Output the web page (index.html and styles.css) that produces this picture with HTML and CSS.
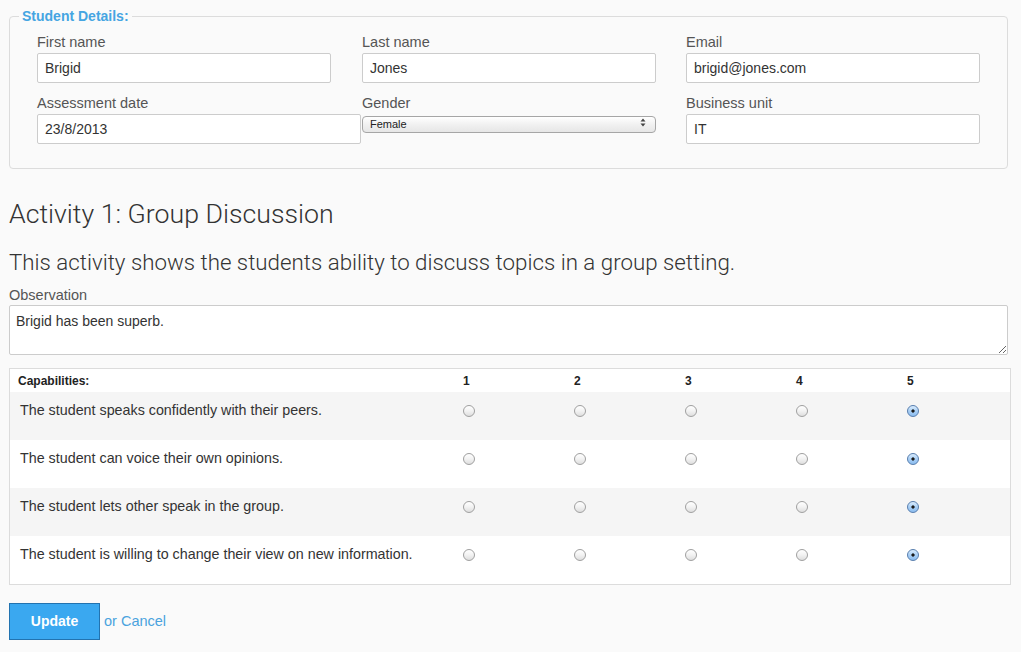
FILE: index.html
```html
<!DOCTYPE html>
<html>
<head>
<meta charset="utf-8">
<link rel="stylesheet" href="styles.css">
</head>
<body>
<div class="page">
  <fieldset class="details">
    <legend>Student Details:</legend>
    <div class="grid">
      <div class="field">
        <label class="lbl">First name</label>
        <input class="txt" type="text" value="Brigid">
      </div>
      <div class="field">
        <label class="lbl">Last name</label>
        <input class="txt" type="text" value="Jones">
      </div>
      <div class="field">
        <label class="lbl">Email</label>
        <input class="txt" type="text" value="brigid@jones.com">
      </div>
      <div class="field">
        <label class="lbl">Assessment date</label>
        <input class="txt wide" type="text" value="23/8/2013">
      </div>
      <div class="field">
        <label class="lbl">Gender</label>
        <div class="select-wrap">
          <select class="sel"><option>Female</option><option>Male</option></select>
          <svg class="sel-arrows" width="6" height="9" viewBox="0 0 6 9"><path d="M3 0.5 L5.5 3.5 H0.5 Z M3 8.5 L5.5 5.5 H0.5 Z" fill="#444"/></svg>
        </div>
      </div>
      <div class="field">
        <label class="lbl">Business unit</label>
        <input class="txt" type="text" value="IT">
      </div>
    </div>
  </fieldset>

  <h2 class="title">Activity 1: Group Discussion</h2>
  <p class="lead">This activity shows the students ability to discuss topics in a group setting.</p>

  <label class="lbl obs-lbl">Observation</label>
  <textarea class="obs">Brigid has been superb.</textarea>

  <table class="caps">
    <thead>
      <tr><th class="cap-col">Capabilities:</th><th>1</th><th>2</th><th>3</th><th>4</th><th>5</th></tr>
    </thead>
    <tbody>
      <tr class="odd">
        <td class="cap-col">The student speaks confidently with their peers.</td>
        <td><input class="rad" type="radio" name="q1"></td><td><input class="rad" type="radio" name="q1"></td><td><input class="rad" type="radio" name="q1"></td><td><input class="rad" type="radio" name="q1"></td><td><input class="rad" type="radio" name="q1" checked></td>
      </tr>
      <tr>
        <td class="cap-col">The student can voice their own opinions.</td>
        <td><input class="rad" type="radio" name="q2"></td><td><input class="rad" type="radio" name="q2"></td><td><input class="rad" type="radio" name="q2"></td><td><input class="rad" type="radio" name="q2"></td><td><input class="rad" type="radio" name="q2" checked></td>
      </tr>
      <tr class="odd">
        <td class="cap-col">The student lets other speak in the group.</td>
        <td><input class="rad" type="radio" name="q3"></td><td><input class="rad" type="radio" name="q3"></td><td><input class="rad" type="radio" name="q3"></td><td><input class="rad" type="radio" name="q3"></td><td><input class="rad" type="radio" name="q3" checked></td>
      </tr>
      <tr>
        <td class="cap-col">The student is willing to change their view on new information.</td>
        <td><input class="rad" type="radio" name="q4"></td><td><input class="rad" type="radio" name="q4"></td><td><input class="rad" type="radio" name="q4"></td><td><input class="rad" type="radio" name="q4"></td><td><input class="rad" type="radio" name="q4" checked></td>
      </tr>
    </tbody>
  </table>

  <div class="actions">
    <button class="btn" type="button">Update</button>
    <a class="cancel" href="#">or Cancel</a>
  </div>
</div>
</body>
</html>
```

FILE: styles.css
```css
html, body {
  margin: 0;
  padding: 0;
  background: #fafafa;
}
body {
  font-family: "Liberation Sans", Arial, sans-serif;
  color: #333;
}
.page {
  width: 999px;
  padding: 8px 0 0 9px;
}
.details {
  margin: 0;
  padding: 10px 27px 24px 27px;
  border: 1px solid #dcdcdc;
  border-radius: 4px;
  min-width: 0;
}
.details legend {
  padding: 0 3px;
  margin-left: -18px;
  font-size: 14px;
  line-height: 16px;
  font-weight: bold;
  color: #45a5e2;
}
.grid {
  display: grid;
  grid-template-columns: 325px 324px 294px;
  row-gap: 12px;
}
.field {
  display: flex;
  flex-direction: column;
  align-items: flex-start;
}
.lbl {
  display: block;
  font-size: 14.5px;
  line-height: 17px;
  color: #555;
  margin-bottom: 2px;
}
.txt {
  box-sizing: border-box;
  width: 294px;
  height: 30px;
  margin: 0;
  padding: 0 7px;
  border: 1px solid #ccc;
  border-radius: 2px;
  background: #fff;
  font-family: "Liberation Sans", Arial, sans-serif;
  font-size: 14px;
  color: #333;
  outline: none;
}
.txt.wide {
  width: 324px;
}
.select-wrap {
  position: relative;
  width: 294px;
  height: 17px;
}
.sel {
  -webkit-appearance: none;
  appearance: none;
  box-sizing: border-box;
  width: 294px;
  height: 17px;
  margin: 0;
  padding: 0 0 0 7px;
  border: 1px solid #a6a6a6;
  border-radius: 4px;
  background: linear-gradient(#ffffff, #f1f1f1 50%, #e6e6e6);
  font-family: "Liberation Sans", Arial, sans-serif;
  font-size: 11px;
  line-height: 15px;
  color: #222;
  outline: none;
}
.sel-arrows {
  position: absolute;
  right: 10px;
  top: 4px;
  pointer-events: none;
}
.title {
  margin: 30px 0 0 0;
  font-family: Roboto, "Open Sans", sans-serif;
  font-weight: 300;
  font-size: 26.7px;
  line-height: 30px;
  color: #333;
}
.lead {
  margin: 20px 0 0 0;
  font-family: Roboto, "Open Sans", sans-serif;
  font-weight: 300;
  font-size: 22.3px;
  line-height: 26px;
  color: #333;
}
.obs-lbl {
  margin-top: 12px;
  margin-bottom: 1px;
}
.obs {
  display: block;
  box-sizing: border-box;
  width: 999px;
  height: 50px;
  margin: 0;
  padding: 7px 6px;
  border: 1px solid #ccc;
  border-radius: 2px;
  background: #fff;
  font-family: "Liberation Sans", Arial, sans-serif;
  font-size: 14px;
  line-height: 16px;
  color: #333;
  resize: vertical;
  outline: none;
}
.caps {
  margin-top: 13px;
  width: 999px;
  border: 1px solid #dcdcdc;
  border-collapse: collapse;
  background: #fff;
  table-layout: fixed;
}
.caps th {
  height: 23px;
  padding: 0 0 0 8px;
  text-align: left;
  font-size: 12px;
  font-weight: bold;
  color: #222;
  vertical-align: middle;
  width: 103px;
}
.caps th.cap-col {
  width: 437px;
}
.caps td {
  height: 48px;
  padding: 10px 0 0 8px;
  box-sizing: border-box;
  vertical-align: top;
  font-size: 14.3px;
  line-height: 16px;
  color: #333;
}
.caps td.cap-col {
  padding-left: 10px;
}
.caps tr.odd td {
  background: #f5f5f5;
}
.rad {
  -webkit-appearance: none;
  appearance: none;
  display: block;
  box-sizing: border-box;
  width: 12px;
  height: 12px;
  margin: 3px 0 0 0;
  border: 1px solid #a0a0a0;
  border-radius: 50%;
  background: linear-gradient(#ffffff, #f2f2f2 50%, #dedede);
}
.rad:checked {
  border-color: #5a7fae;
  background: radial-gradient(circle, #1a1a1a 0, #1a1a1a 1.3px, transparent 1.9px), linear-gradient(#d9ecfd, #a9cff5 50%, #8cbdf0);
}
.actions {
  display: flex;
  align-items: center;
  margin-top: 18px;
}
.btn {
  box-sizing: border-box;
  width: 91px;
  height: 37px;
  margin: 0;
  border: 1px solid #2273b0;
  background: #3aa8f0;
  color: #fff;
  font-family: "Liberation Sans", Arial, sans-serif;
  font-size: 14px;
  font-weight: bold;
  cursor: pointer;
}
.cancel {
  margin-left: 4px;
  font-size: 14.5px;
  color: #4aa3de;
  text-decoration: none;
}
```
